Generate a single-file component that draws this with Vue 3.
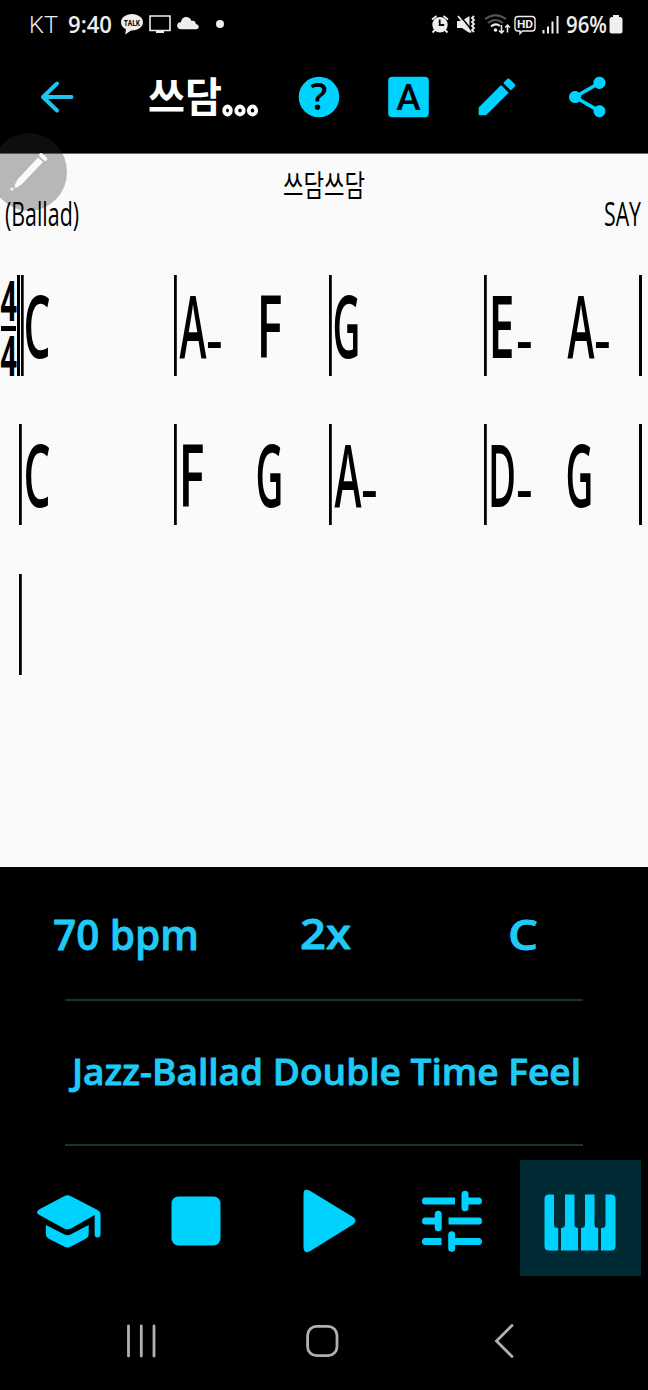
<script setup>
import { ref } from 'vue'

// x offset, drawn width of each chord root
const glyphs = {
  A: { x: 5.5, width: 27 },
  C: { x: 4.5, width: 27 },
  D: { x: 4, width: 28 },
  E: { x: 4.5, width: 26 },
  F: { x: 4.5, width: 26 },
  G: { x: 3.5, width: 28 }
}

const rows = [
  {
    time: true,
    measures: [['C', ''], ['A-', 'F'], ['G', ''], ['E-', 'A-']]
  },
  {
    time: false,
    measures: [['C', ''], ['F', 'G'], ['A-', ''], ['D-', 'G']]
  }
]

const song = {
  title: '쓰담쓰담',
  style: '(Ballad)',
  composer: 'SAY'
}

const activeTool = ref('piano')
</script>

<template>
  <div class="screen">
    <div class="status-bar">
      <div class="status-left">
        <svg class="carrier" width="29" height="30">
          <text x="-1" y="23" textLength="29" lengthAdjust="spacingAndGlyphs">KT</text>
        </svg>
        <svg class="clock" width="46" height="30">
          <text x="0" y="22.500" textLength="44" lengthAdjust="spacingAndGlyphs">9:40</text>
        </svg>
        <svg class="talk" width="22" height="30">
          <path d="M11 4C4.900 4 0 7.600 0 12.300c0 3.200 2 5.700 5 7L4.200 24.500 10 20.500c7 .300 12-3.500 12-8.200S17.100 4 11 4z" fill="#eee" />
          <text x="3" y="15.500" textLength="16" lengthAdjust="spacingAndGlyphs">TALK</text>
        </svg>
        <svg class="cast" width="22" height="30">
          <path d="M1 6h20v14.500H1z" fill="none" stroke="#eee" stroke-width="1.600" />
          <path d="M7 20h8v3H7z" fill="#eee" />
        </svg>
        <svg class="cloud" width="22" height="30">
          <path d="M4.500 19.300C-1.500 19.300-1 11.800 4 12.300 4.500 5.500 13 5.500 14.500 11c3-.700 4.300 1 4.300 3 4 .700 3.700 5.300.400 5.300z" fill="#eee" />
        </svg>
        <span class="dot"></span>
      </div>
      <div class="status-right">
        <svg class="alarm" width="18" height="30">
          <path d="M1 9.500L5.500 6M17 9.500L12.500 6M4 20l-2.500 2.500M14 20l2.500 2.500" stroke="#eee" stroke-width="1.800" />
          <circle cx="9" cy="14.700" r="7.700" fill="#eee" />
          <path d="M8.700 9.500V15h4.500" fill="none" stroke="#000" stroke-width="1.800" />
        </svg>
        <svg class="mute" width="20" height="30">
          <path d="M0 11h4.500L12.500 6v17L5 18H0z" fill="#eee" />
          <path d="M2.500 5l13 16" stroke="#000" stroke-width="1.500" />
          <path d="M1 6l13 16.500" stroke="#eee" stroke-width="1.800" />
          <path d="M17 6l-2 2 2 2-2 2 2 2-2 2 2 2-2 2 2 2" fill="none" stroke="#eee" stroke-width="1.800" />
        </svg>
        <svg class="wifi" width="27" height="30">
          <path d="M1 9Q11.500 1.500 22 9M4 13Q11.500 7 19 13" fill="none" stroke="#555" stroke-width="2" />
          <path d="M7 16.500Q11.500 12.500 16 16" fill="none" stroke="#eee" stroke-width="2" />
          <circle cx="11.500" cy="20" r="1.800" fill="#eee" />
          <path d="M17.500 15v8m-2.500-2.500l2.500 2.500 2.500-2.500M23.500 22.500V15m-2.300 2.500l2.300-2.500 2.300 2.500" fill="none" stroke="#eee" stroke-width="1.500" />
        </svg>
        <svg class="hd" width="22" height="30">
          <path d="M4 6.500h14q3 0 3 3v8.500q0 3-3 3H8.500L6 23.500V21H4q-3 0-3-3V9.500q0-3 3-3z" fill="none" stroke="#eee" stroke-width="1.400" />
          <text x="3" y="18.200" textLength="16" lengthAdjust="spacingAndGlyphs">HD</text>
        </svg>
        <svg class="signal" width="18" height="30">
          <path d="M1.500 20v3.500M6 16.500v7M10.500 11.500v12M15.500 6v17.500" stroke="#eee" stroke-width="2" />
        </svg>
        <svg class="percent" width="42" height="30">
          <text x="0" y="23" textLength="41" lengthAdjust="spacingAndGlyphs">96%</text>
        </svg>
        <svg class="battery" width="14" height="30">
          <path d="M4 5h6v2h1q2.500 0 2.500 2.500V21q0 2.500-2.500 2.500H3Q.500 23.500.500 21V9.500Q.500 7 3 7h1z" fill="#eee" />
        </svg>
      </div>
    </div>

    <header class="toolbar">
      <svg class="back" width="34" height="34" viewBox="0 0 34 34">
        <path d="M17 3.500L3 17l14 13.500M3 17h28.500" />
      </svg>
      <svg class="title" width="116" height="50">
        <text x="0" y="40" textLength="74" lengthAdjust="spacingAndGlyphs">쓰담</text>
        <g class="title-dots">
          <ellipse cx="79.500" cy="38.500" rx="3.300" ry="4" />
          <ellipse cx="92" cy="38.500" rx="3.700" ry="4" />
          <ellipse cx="104.500" cy="38.500" rx="3.700" ry="4" />
        </g>
      </svg>
      <div class="actions">
        <svg width="42" height="42" viewBox="0 0 42 42">
          <circle cx="21" cy="21" r="20.300" />
          <text class="cutout help" x="21" y="34" text-anchor="middle">?</text>
        </svg>
        <svg width="42" height="42" viewBox="0 0 42 42">
          <rect x=".200" y=".700" width="40.600" height="40.600" rx="4" />
          <text class="cutout font" x="20.500" y="34" text-anchor="middle">A</text>
        </svg>
        <svg width="42" height="42" viewBox="2.200 1.700 20.700 20.700">
          <path d="M3 17.460V20.500c0 .280.220.500.500.500h3.040c.130 0 .260-.050.350-.150L17.810 9.940l-3.750-3.750L3.150 17.100c-.100.100-.150.220-.150.360zM20.710 7.040a1 1 0 0 0 0-1.410l-2.340-2.340a1 1 0 0 0-1.410 0l-1.830 1.830 3.750 3.750 1.830-1.830z" />
        </svg>
        <svg width="42" height="42" viewBox="2 1.650 20.700 20.700">
          <path d="M18 16.080c-.760 0-1.440.300-1.960.770L8.910 12.700c.050-.230.090-.460.090-.700s-.040-.470-.090-.700l7.050-4.110c.540.500 1.250.810 2.040.810 1.660 0 3-1.340 3-3s-1.340-3-3-3-3 1.340-3 3c0 .240.040.470.090.700L8.040 9.810C7.500 9.310 6.790 9 6 9c-1.660 0-3 1.340-3 3s1.340 3 3 3c.790 0 1.500-.310 2.040-.810l7.120 4.160c-.050.210-.080.430-.080.650 0 1.610 1.310 2.920 2.920 2.920s2.920-1.310 2.920-2.920-1.310-2.920-2.920-2.920z" />
        </svg>
      </div>
    </header>

    <main class="sheet">
      <div class="pen-bubble">
        <svg width="44" height="44" viewBox="0 0 44 44">
          <path d="M30 6.500l5 4.500L14 33q-4 3.500-7.500 4Q6.500 33 9.500 28.500z" fill="#fafafa" />
          <path d="M33 4l4.300 4" stroke="#fafafa" stroke-width="4" stroke-linecap="round" />
          <circle cx="4" cy="38" r="1.600" fill="#fafafa" />
        </svg>
      </div>
      <svg class="song-title" width="86" height="40">
        <text x="2" y="31.500" textLength="82" lengthAdjust="spacingAndGlyphs">{{ song.title }}</text>
      </svg>
      <div class="song-info">
        <svg width="76" height="40">
          <text x="0" y="26" textLength="74" lengthAdjust="spacingAndGlyphs">{{ song.style }}</text>
        </svg>
        <svg width="40" height="40">
          <text x="1" y="26" textLength="37" lengthAdjust="spacingAndGlyphs">{{ song.composer }}</text>
        </svg>
      </div>

      <div class="chart">
        <div v-for="(row, i) in rows" :key="i" class="row">
          <div class="lead">
            <svg v-if="row.time" class="time" width="19" height="101">
              <text x="0.500" y="46" textLength="16.500" lengthAdjust="spacingAndGlyphs">4</text>
              <path d="M1 53.500h15" />
              <text x="0.500" y="100.500" textLength="16.500" lengthAdjust="spacingAndGlyphs">4</text>
            </svg>
          </div>
          <div
            v-for="(measure, j) in row.measures"
            :key="j"
            class="measure"
            :class="{ double: row.time && j === 0 }"
          >
            <svg
              v-for="(chord, k) in measure"
              :key="k"
              class="chord"
              width="77.500"
              height="101"
            >
              <template v-if="chord">
                <text
                  :x="glyphs[chord[0]].x"
                  y="83"
                  :textLength="glyphs[chord[0]].width"
                  lengthAdjust="spacingAndGlyphs"
                >{{ chord[0] }}</text>
                <text v-if="chord[1]" class="minor" x="32.500" y="82.500">-</text>
              </template>
            </svg>
          </div>
          <div class="bar-end"></div>
        </div>
        <div class="row">
          <div class="lead"></div>
          <div class="measure"></div>
        </div>
      </div>
    </main>

    <section class="settings">
      <div class="values">
        <svg width="248" height="60">
          <text x="0" y="43" textLength="146" lengthAdjust="spacingAndGlyphs">70 bpm</text>
        </svg>
        <svg width="208" height="60">
          <text x="-1" y="42" textLength="51" lengthAdjust="spacingAndGlyphs">2x</text>
        </svg>
        <svg width="34" height="60">
          <text x="-1" y="43" textLength="30" lengthAdjust="spacingAndGlyphs">C</text>
        </svg>
      </div>
      <div class="style-name">
        <svg width="518" height="60">
          <text x="7" y="41" textLength="509" lengthAdjust="spacingAndGlyphs">Jazz-Ballad Double Time Feel</text>
        </svg>
      </div>
    </section>

    <div class="transport">
      <button class="tool">
        <svg width="65" height="56" viewBox="0.500 0 66 56">
          <path d="M28 2.800q3.500-2 7 0l27 14q3 1.500 3 4v21a3 3 0 0 1-6 0V22L35 35.500q-3.500 2-7 0L3 22q-5-3 0-6z" />
          <path d="M9.500 32L28 41.500q3.500 2 7 0L53 32v9q0 3.500-3 5L35 54q-3.500 2-7 0L12.500 46q-3-1.500-3-5z" />
        </svg>
      </button>
      <button class="tool">
        <svg width="50" height="50">
          <rect x=".500" y=".500" width="49" height="49" rx="7" />
        </svg>
      </button>
      <button class="tool">
        <svg width="54" height="64" viewBox="0 0 54 64">
          <path d="M1.500 5q0-6 6-3.500L51 28q5 3.500 0 7.500L7.500 62.500Q1.500 65 1.500 58z" />
        </svg>
      </button>
      <button class="tool">
        <svg class="sliders" width="62" height="62" viewBox="0 0 62 62">
          <path d="M34 7.500v7H4q-3 0-3-3.500t3-3.500zM27.500 27.500h30.500q3 0 3 3.500t-3 3.500H27.500zM20.500 48v7H4q-3 0-3-3.500T4 48z" />
          <path class="line" d="M44 4.200v13.600M44 11h13.500M17.200 24.200v13.600M4.500 31h12.700M30.700 44.700v13.600M30.700 51.500h26.800" />
        </svg>
      </button>
      <button class="tool" :class="{ active: activeTool === 'piano' }" @click="activeTool = 'piano'">
        <svg class="piano" width="72" height="57" viewBox="0 0 72 57">
          <path d="M5 .500h5V30.500q0 3.500 3.500 3.500h.700V56.500H5q-4.500 0-4.500-4.500V5Q.500.500 5 .500zM21 .500h9.500V30.500q0 3.500 3.500 3.500V56.500H17V34q4 0 4-3.500zM41 .500h9.500V30.500q0 3.500 3.700 3.500V56.500H37V34q4 0 4-3.500zM61.500.500h5.500q4.500 0 4.500 4.500v47q0 4.500-4.500 4.500h-10V34h1q3.500 0 3.500-3.500z" />
        </svg>
      </button>
    </div>

    <nav class="nav-bar">
      <svg width="34" height="34" viewBox="0 0 34 34">
        <path d="M4.500 2v30M17.300 2v30M30 2v30" />
      </svg>
      <svg width="34" height="34" viewBox="0 0 34 34">
        <rect x="1.600" y="2.300" width="29.400" height="29.400" rx="9" />
      </svg>
      <svg width="34" height="34" viewBox="0 0 34 34">
        <path d="M25 1.500L9.500 17 25 32.500" />
      </svg>
    </nav>
  </div>
</template>

<style>
body {
  background: #000;
}
</style>

<style scoped>
.screen {
  width: 648px;
  height: 1390px;
  display: flex;
  flex-direction: column;
  overflow: hidden;
  background: #000;
  font-family: "Open Sans", "Noto Sans CJK KR", sans-serif;
}

svg {
  display: block;
  flex: none;
  overflow: visible;
}

.status-bar {
  height: 40px;
  padding: 10px 25px 0 30px;
  box-sizing: border-box;
  display: flex;
  justify-content: space-between;
}

.status-left,
.status-right {
  display: flex;
}

.status-bar text {
  fill: #eee;
}

.carrier text {
  font: 300 23px Roboto, sans-serif;
}

.clock {
  margin-left: 9px;
}

.clock text,
.percent text {
  font-size: 23px;
  font-weight: 600;
}

.status-bar .talk text {
  fill: #000;
  font-size: 8px;
  font-weight: 700;
}

.talk {
  margin-left: 7px;
}

.cast,
.cloud {
  margin-left: 6px;
}

.dot {
  width: 8px;
  height: 8px;
  margin: 10px 0 0 17px;
  border-radius: 50%;
  background: #eee;
}

.mute {
  margin-left: 8px;
}

.wifi {
  margin-left: 7px;
}

.hd {
  margin-left: 3px;
}

.hd text {
  font: 700 11.500px Roboto, sans-serif;
}

.signal {
  margin-left: 6px;
}

.percent {
  margin-left: 6px;
}

.battery {
  margin-left: 1px;
}

.toolbar {
  height: 113px;
  padding: 0 39px 0 40px;
  box-sizing: border-box;
  display: flex;
  align-items: center;
}

.back path {
  fill: none;
  stroke: #1fc4f0;
  stroke-width: 4;
  stroke-linecap: round;
  stroke-linejoin: round;
}

.title {
  margin-left: 74px;
}

.title text {
  fill: #fff;
  font-size: 41px;
  font-weight: 700;
}

.title-dots {
  fill: none;
  stroke: #fff;
  stroke-width: 3.800;
}

.actions {
  flex: 1;
  margin-left: 34px;
  display: flex;
  justify-content: space-between;
  fill: #00d2ff;
}

.cutout {
  fill: #000;
}

.help {
  font-size: 37px;
  font-weight: 600;
}

.font {
  font-family: Roboto, sans-serif;
  font-weight: 500;
  font-size: 37px;
}

.sheet {
  position: relative;
  height: 714px;
  box-sizing: border-box;
  border-top: 1px solid #666;
  background: #fafafa;
}

.pen-bubble {
  position: absolute;
  left: -9px;
  top: -21px;
  width: 76px;
  height: 78px;
  border-radius: 50%;
  background: rgba(45, 45, 45, 0.32);
}

.pen-bubble svg {
  margin: 18px 0 0 17px;
}

.song-title {
  margin: 10px auto 0;
}

.song-title text {
  font-size: 30px;
  font-weight: 400;
}

.song-info {
  position: relative;
  margin-top: -4px;
  padding: 0 5px;
  display: flex;
  justify-content: space-between;
}

.song-info text {
  font-size: 32px;
}

.chart {
  margin-top: 35px;
  display: flex;
  flex-direction: column;
  gap: 48.300px;
}

.row {
  height: 101px;
  display: flex;
}

.lead {
  width: 19px;
  flex: none;
}

.time text {
  font-size: 56px;
  font-weight: 700;
}

.time path {
  stroke: #000;
  stroke-width: 5;
}

.measure {
  position: relative;
  width: 155px;
  flex: none;
  display: flex;
  background: linear-gradient(#000, #000) left / 2.800px 100% no-repeat;
}

.measure.double {
  margin-left: -2px;
  width: 157px;
  background: linear-gradient(90deg, #000 2.500px, #fafafa 2.500px, #fafafa 4px, #000 4px) left / 6.700px 100% no-repeat;
}

.double .chord:first-child {
  margin-left: 2px;
}

.bar-end {
  width: 3px;
  background: #000;
}

.chord text {
  fill: #000;
  font-size: 86px;
  font-weight: 600;
}

.chord .minor {
  font-size: 49px;
  font-weight: 700;
}

.settings {
  padding: 0 65px;
}

.settings text {
  fill: #1fcbf6;
  stroke: #1fcbf6;
  stroke-width: 0.800;
  stroke-linejoin: round;
  font-weight: 600;
}

.values {
  height: 132px;
  margin-left: -12px;
  padding-top: 40px;
  box-sizing: border-box;
  display: flex;
}

.values text {
  font-size: 42px;
}

.style-name {
  height: 147px;
  padding-top: 43px;
  box-sizing: border-box;
  border: solid #17343b;
  border-width: 2px 0;
}

.style-name text {
  font-size: 36px;
}

.transport {
  height: 130px;
  padding: 14px 7px 0;
  box-sizing: border-box;
  display: grid;
  grid-template-columns: 125px 128px 138px 122px 121px;
}

.tool {
  height: 116px;
  padding: 0;
  border: 0;
  background: none;
  display: flex;
  align-items: center;
  justify-content: center;
  fill: #00d2ff;
}

.tool svg {
  margin-top: 6px;
}

.tool .sliders {
  margin-right: 14px;
}

.tool .piano {
  margin-right: 1px;
  margin-top: 8px;
}

.tool.active {
  background: #002b34;
}

.sliders .line {
  fill: none;
  stroke: #00d2ff;
  stroke-width: 7;
  stroke-linecap: round;
}

.nav-bar {
  height: 114px;
  padding: 16px 127px 0 124px;
  box-sizing: border-box;
  display: flex;
  align-items: center;
  justify-content: space-between;
  fill: none;
  stroke: #b0b0b0;
  stroke-width: 2.800;
  stroke-linecap: round;
}
</style>
